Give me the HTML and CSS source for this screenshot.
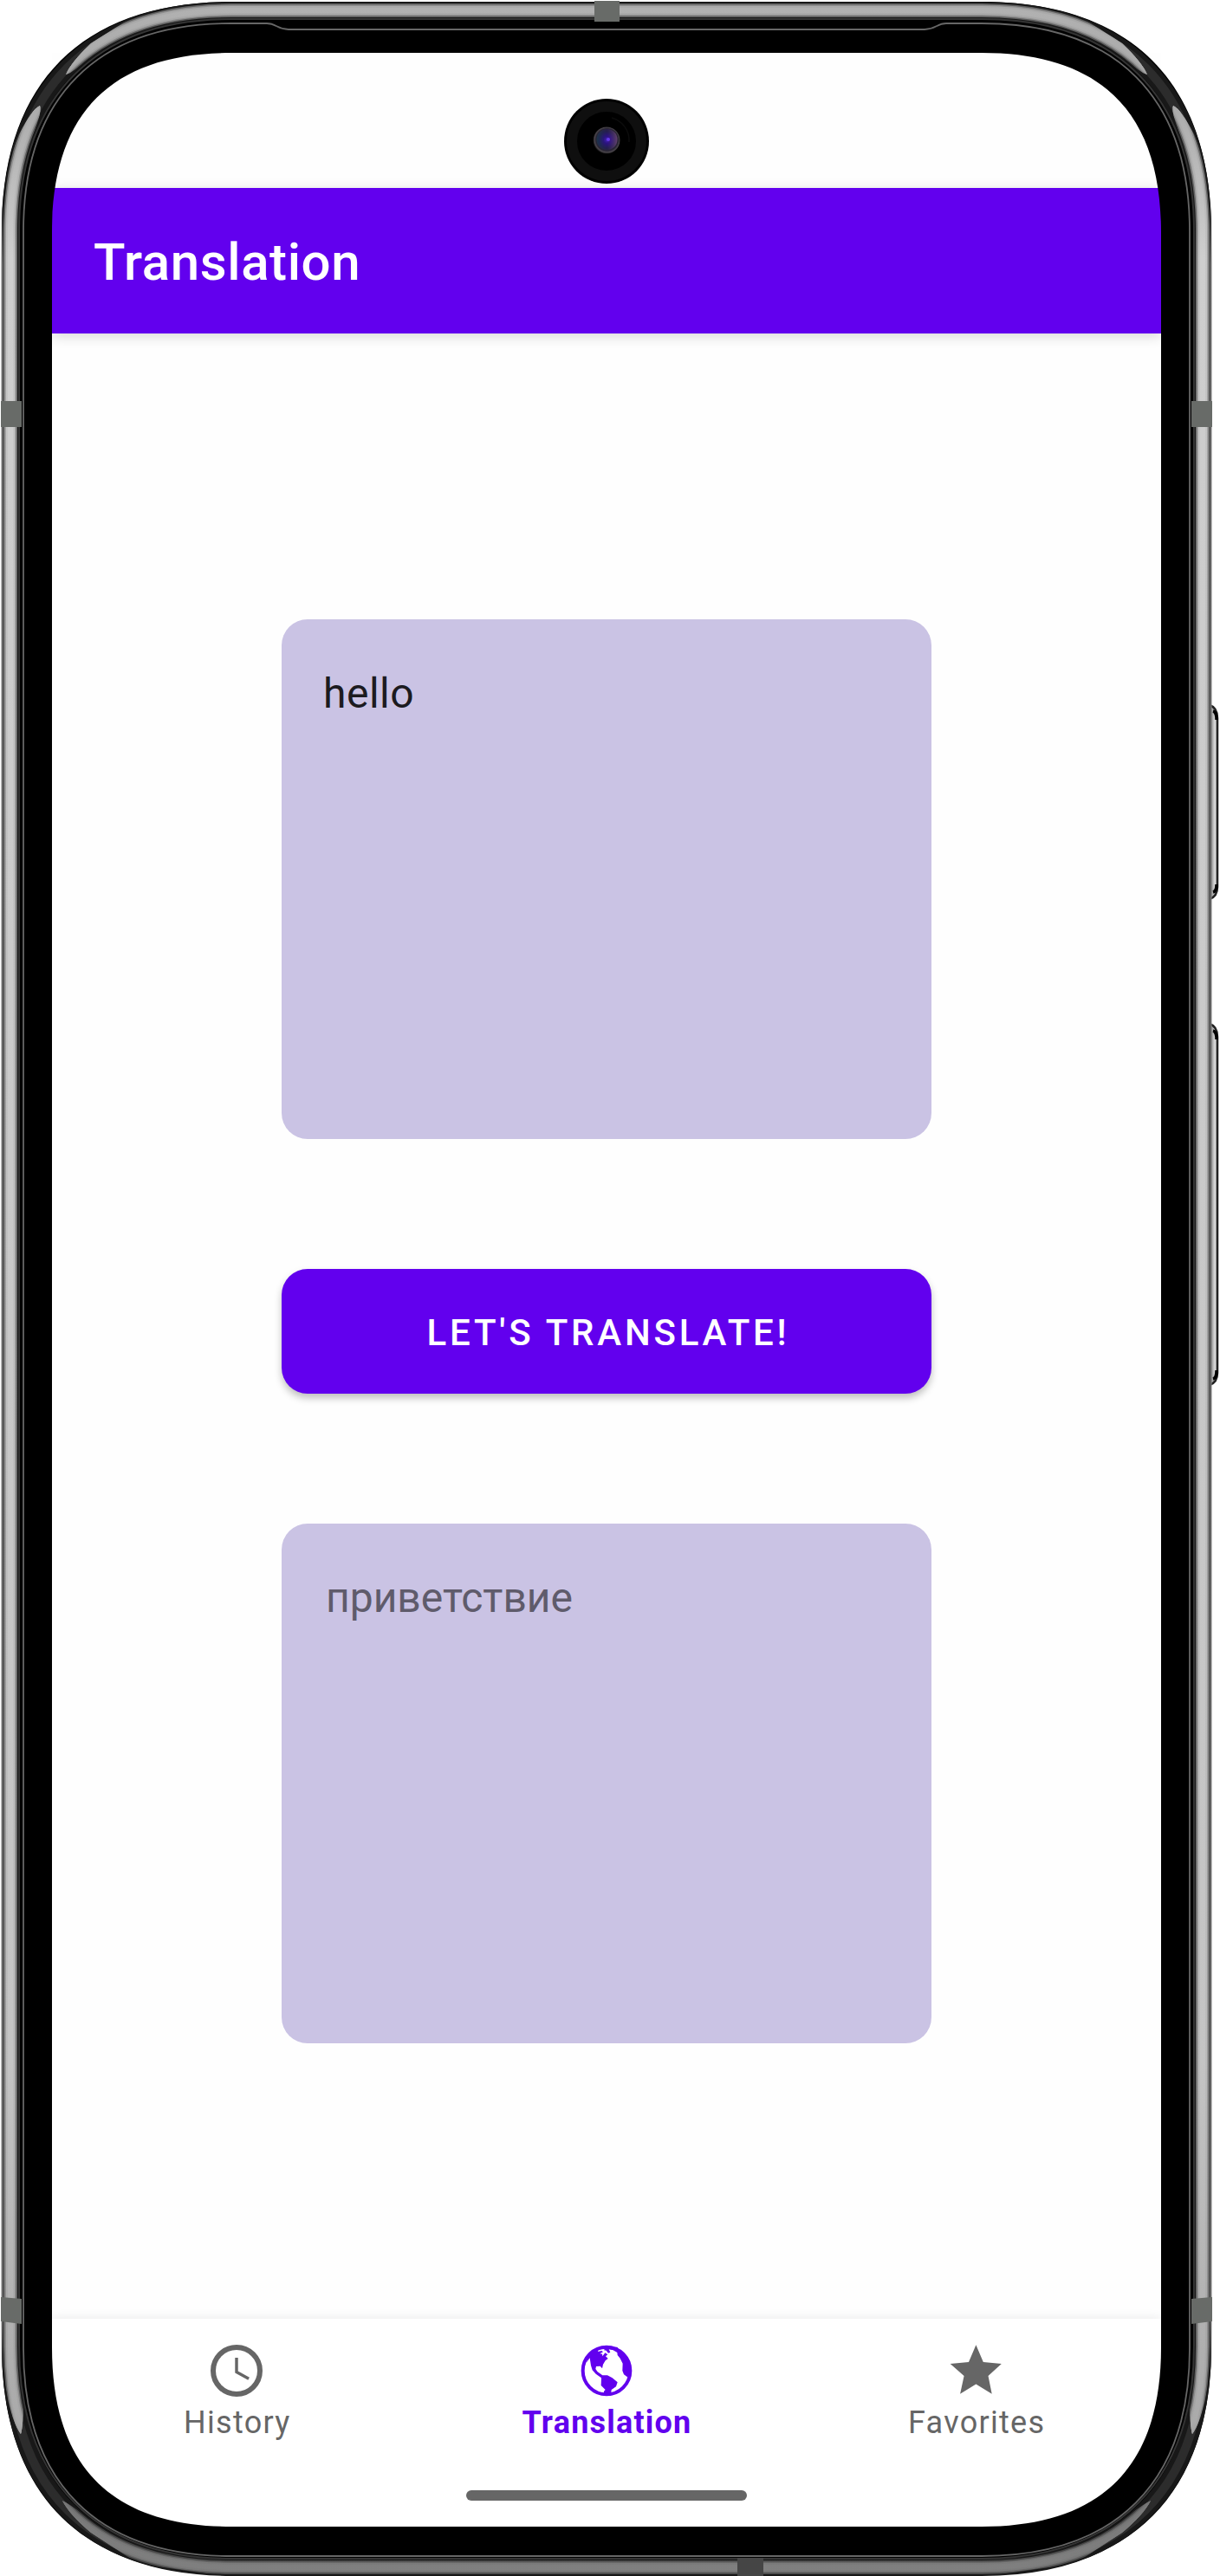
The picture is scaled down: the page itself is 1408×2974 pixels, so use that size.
FILE: index.html
```html
<!DOCTYPE html>
<html lang="en">
<head>
<meta charset="utf-8">
<title>Translation</title>
<link rel="stylesheet" href="styles.css">
</head>
<body>
<div class="phone">
  <div class="screen">
    <div class="status-bar"></div>
    <header class="app-bar"><h1 class="app-title">Translation</h1></header>
    <main class="content">
      <div class="text-card">hello</div>
      <button class="translate-button" type="button">LET'S TRANSLATE!</button>
      <div class="text-card text-card-result">приветствие</div>
    </main>
    <nav class="bottom-nav">
      <a class="nav-item">
        <svg class="nav-icon" viewBox="0 0 24 24" fill="none" stroke="currentColor"><circle cx="12" cy="12" r="9" stroke-width="2"/><path d="M12 7v5.5l4.7 2.6" stroke-width="1.15"/></svg>
        <span class="nav-label">History</span>
      </a>
      <a class="nav-item nav-item-active">
        <svg class="nav-icon" viewBox="192 32 216 216" fill="currentColor">
          <circle cx="300" cy="140" r="82" fill="none" stroke="currentColor" stroke-width="12"/>
          <path d="M240 82L258 66L272 67L270 74L283 71L288 75L277 81L285 82L286 90L295 78L304 84L297 90L305 98L296 105L288 118L285 132L278 124L264 125L262 134L269 144L286 156L303 156L320 165L338 180L333 195L317 206L315 226L291 226L291 211L296 206L281 191L282 165L263 151L251 138L246 122L242 96L230 112Z"/>
          <path d="M280 58H337L345 70L360 85L376 105L384 130L382 155L372 162L360 153L355 140L356 115L347 97L338 86L337 77L323 69L308 66L313 76L306 79L299 70L291 69L293 66Z"/>
        </svg>
        <span class="nav-label">Translation</span>
      </a>
      <a class="nav-item">
        <svg class="nav-icon" viewBox="0 0 24 24" fill="currentColor"><path d="M11.8 2.1L14.6 8.7L21.6 9.3L16.5 14L17.9 20.9L11.8 17.2L5.7 20.9L7.2 14L1.9 9.3L9 8.7Z"/></svg>
        <span class="nav-label">Favorites</span>
      </a>
    </nav>
    <div class="gesture-area"><div class="gesture-handle"></div></div>
  </div>

  <svg class="frame" viewBox="0 0 1408 2974" fill="none">
    <defs>
      <linearGradient id="metal" gradientUnits="userSpaceOnUse" x1="0" y1="0" x2="0" y2="2974">
        <stop offset="0" stop-color="#b2b2b2"/><stop offset=".035" stop-color="#a8a8a8"/><stop offset=".1" stop-color="#cecece"/>
        <stop offset=".8" stop-color="#c4c4c4"/><stop offset=".94" stop-color="#aaa"/><stop offset=".965" stop-color="#777"/><stop offset="1" stop-color="#808080"/>
      </linearGradient>
      <linearGradient id="rim" gradientUnits="userSpaceOnUse" x1="0" y1="230" x2="0" y2="2745">
        <stop offset="0" stop-color="#777" stop-opacity="0"/><stop offset=".03" stop-color="#777"/><stop offset=".97" stop-color="#777"/><stop offset="1" stop-color="#777" stop-opacity="0"/>
      </linearGradient>
      <radialGradient id="lens" cx=".52" cy=".48" r=".52">
        <stop offset="0" stop-color="#4a28c4"/><stop offset=".25" stop-color="#2a1080"/><stop offset=".6" stop-color="#20213f"/><stop offset=".8" stop-color="#292533"/><stop offset=".9" stop-color="#4b464c"/><stop offset="1" stop-color="#111"/>
      </radialGradient>
      <linearGradient id="glint" x1="0" y1="0" x2="1" y2="0"><stop offset="0" stop-color="#15475a"/><stop offset=".5" stop-color="#321683" stop-opacity=".4"/><stop offset="1" stop-color="#a360a5"/></linearGradient>
      <linearGradient id="key" x1="0" y1="0" x2="1" y2="0"><stop offset="0" stop-color="#444"/><stop offset=".35" stop-color="#aaa"/><stop offset=".7" stop-color="#dedede"/><stop offset="1" stop-color="#999"/></linearGradient>
      <path id="rail" d="M12 267C12 103 103 12 267 12H1133C1297 12 1388 103 1388 267V2709C1388 2873 1297 2964 1133 2964H267C103 2964 12 2873 12 2709Z"/>
      <clipPath id="lit">
        <path d="M0 210L22 155Q37 126 46 122Q48 128 43 142L31 180L26 260V2700L28 2770Q26 2805 24 2810Q16 2800 9 2770L0 2720Z"/>
        <path d="M1400 210L1378 155Q1363 126 1354 122Q1352 128 1357 142L1369 180L1374 260V2700L1372 2770Q1374 2805 1376 2810Q1384 2800 1391 2770L1400 2720Z"/>
        <path d="M76 86Q82 72 105 50L160 15L260 0H1140L1240 15L1295 50Q1318 72 1324 86Q1316 84 1298 68L1235 36L1140 24H260L165 36L102 68Q84 84 76 86Z"/>
        <path d="M72 2887Q82 2892 105 2909L170 2940L260 2950H1140L1230 2940L1295 2909Q1318 2892 1328 2887Q1320 2903 1295 2924L1240 2960L1140 2974H260L160 2960L105 2924Q80 2903 72 2887Z"/>
      </clipPath>
    </defs>

    <!-- Side keys -->
    <g stroke="#222" stroke-width="2.500">
      <path d="M1396 814Q1405 817 1405 829V1024Q1405 1035 1396 1038Z" fill="url(#key)"/>
      <path d="M1396 1182Q1405 1185 1405 1197V1585Q1405 1596 1396 1599Z" fill="url(#key)"/>
    </g>
    <path d="M1400 821Q1404 822 1404 831M1400 1030Q1404 1029 1404 1021M1400 1190Q1404 1191 1404 1200M1400 1592Q1404 1591 1404 1582" stroke="#000" stroke-width="3.5"/>

    <!-- Body with the display cut out -->
    <path fill="#000" fill-rule="evenodd" d="M2 267C2 95 95 2 267 2H1133C1305 2 1398 95 1398 267V2708C1398 2880 1305 2973 1133 2973H267C95 2973 2 2880 2 2708ZM60 268C60 130 129 61 267 61H1133C1271 61 1340 130 1340 268V2710C1340 2848 1271 2917 1133 2917H267C129 2917 60 2848 60 2710Z"/>
    <use href="#rail" stroke="#181818" stroke-width="20"/>
    <use href="#rail" stroke="#2c2c2c" stroke-width="10"/>
    <path d="M22 267C22 111 111 22 267 22H1133C1289 22 1378 111 1378 267V2708C1378 2864 1289 2954 1133 2954H267C111 2954 22 2864 22 2708Z" stroke="#343434" stroke-width="2"/>
    <g clip-path="url(#lit)" stroke="url(#metal)">
      <use href="#rail" stroke-width="16" stroke-opacity=".45"/>
      <use href="#rail" stroke-width="13" stroke-opacity=".6"/>
      <use href="#rail" stroke-width="10" stroke-opacity=".75"/>
      <use href="#rail" stroke-width="6"/>
    </g>
    <path d="M1.500 2745V230H3.500V2745ZM1396.500 2745V230H1398.500V2745Z" fill="url(#rim)"/>
    <path d="M27 267C27 112 112 27 267 27H308C319 27 320 34 333 34H1067C1080 34 1081 27 1092 27H1133C1288 27 1373 112 1373 267V2711C1373 2866 1288 2951 1133 2951H267C112 2951 27 2866 27 2711Z" stroke="#666" stroke-width="1.8"/>
    <!-- Antenna breaks -->
    <path fill="#686b68" d="M1 463H25V493H1ZM1375 463H1399V493H1375ZM1 2652L25 2654V2683L1 2680ZM1375 2654L1399 2652V2680L1375 2683ZM686 1H715V25H686Z"/>
    <path fill="#454545" d="M851 2953H881V2974H851Z"/>

    <!-- Front camera -->
    <circle cx="700" cy="163" r="49" fill="#000"/>
    <circle cx="700" cy="163" r="40" stroke="#0f0f0f" stroke-width="12"/>
    <path d="M706 136A27 27 0 0 1 726 164" stroke="#0c0c0c" stroke-width="1.5"/>
    <circle cx="700" cy="162" r="15.5" fill="url(#lens)"/>
    <circle cx="700.5" cy="161" r="12" fill="url(#glint)" opacity=".5"/>
    <circle cx="702" cy="161" r="2" fill="#6538e8"/>
  </svg>
</div>
</body>
</html>
```
FILE: styles.css
```css
* { box-sizing: border-box; }

body {
  margin: 0;
  background: #fff;
  font-family: Roboto, "Noto Sans", sans-serif;
}

.phone {
  position: relative;
  width: 1408px;
  height: 2974px;
  padding: 61px 68px 57px 60px;
  overflow: hidden;
}

.frame {
  position: absolute;
  inset: 0;
  width: 1408px;
  height: 2974px;
  pointer-events: none;
}

.screen {
  display: flex;
  flex-direction: column;
  width: 1280px;
  height: 2856px;
  background: #fefefe;
  overflow: hidden;
}

.status-bar { height: 156px; flex: none; }

.app-bar {
  display: flex;
  align-items: center;
  flex: none;
  height: 168px;
  padding: 4px 48px 0;
  background: #6200ee;
  color: #fff;
  box-shadow: 0 3px 14px rgba(0, 0, 0, .16);
}

.app-title {
  margin: 0;
  font-size: 60px;
  font-weight: 500;
  line-height: 72px;
  letter-spacing: .6px;
}

.content {
  display: flex;
  flex: 1;
  flex-direction: column;
  align-items: center;
  justify-content: center;
  gap: 150px;
  padding-top: 12px;
}

.text-card {
  width: 750px;
  height: 600px;
  padding: 51px 48px;
  border-radius: 30px;
  background: #cac3e4;
  color: #1c1b1f;
  font-size: 48px;
  line-height: 70px;
  letter-spacing: .5px;
}

.text-card-result {
  padding-left: 51px;
  color: #5f5b6b;
  letter-spacing: 0;
}

.translate-button {
  width: 750px;
  height: 144px;
  padding: 3px 0 0 4px;
  border: 0;
  border-radius: 30px;
  background: #6200ee;
  color: #fff;
  font: 500 42px/48px Roboto, sans-serif;
  letter-spacing: 3.8px;
  box-shadow: 0 5px 9px rgba(0, 0, 0, .25);
}

.bottom-nav {
  display: grid;
  grid-template-columns: repeat(3, 1fr);
  flex: none;
  height: 168px;
  background: #fff;
  box-shadow: 0 0 12px rgba(0, 0, 0, .09);
}

.nav-item {
  display: flex;
  flex-direction: column;
  align-items: center;
  padding-top: 24px;
  color: #666;
}

.nav-item-active { color: #6200ee; }

.nav-icon { width: 72px; height: 72px; }

.nav-label {
  padding: 1px 0 0 1px;
  font-size: 36px;
  line-height: 46px;
  letter-spacing: 1.3px;
}

.nav-item-active .nav-label { font-weight: 700; letter-spacing: 1.2px; }

.gesture-area {
  display: flex;
  justify-content: center;
  flex: none;
  height: 72px;
  padding-top: 30px;
  background: #fff;
}

.gesture-handle {
  width: 324px;
  height: 12px;
  border-radius: 6px;
  background: #666;
}
```
